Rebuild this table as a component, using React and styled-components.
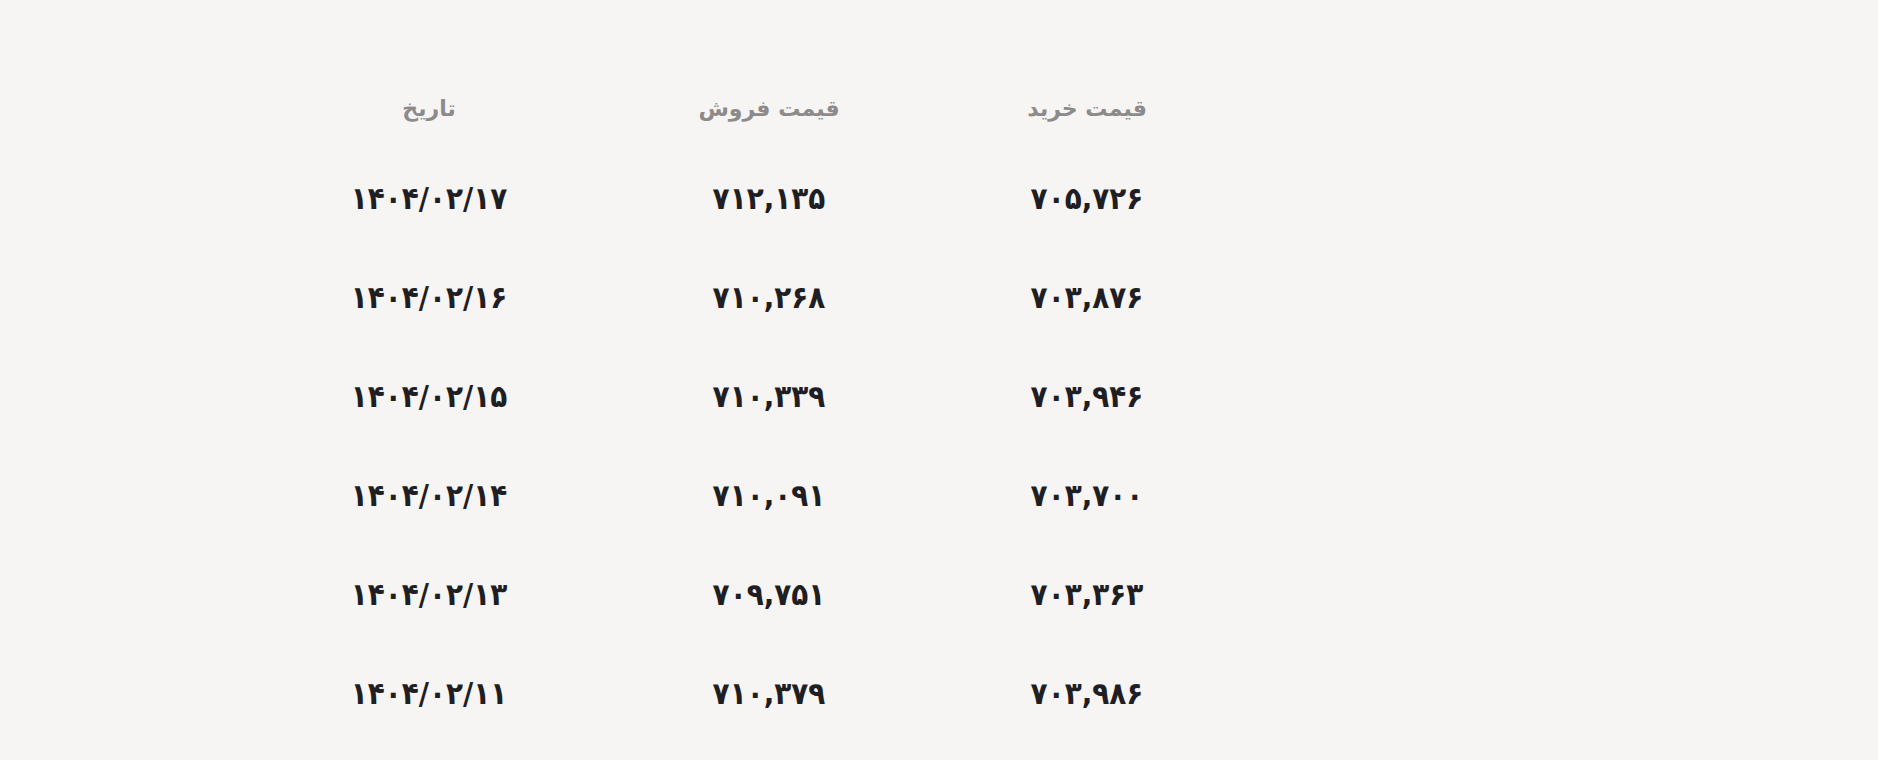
import React from "react";
import styled, { createGlobalStyle } from "styled-components";

const GlobalStyle = createGlobalStyle`
  html, body {
    margin: 0;
    padding: 0;
    background: #f7f4f4;
    font-family: "DejaVu Sans", "Noto Sans", sans-serif;
  }
`;

const rows = [
  { date: "۱۴۰۴/۰۲/۱۷", sell: "۷۱۲,۱۳۵", buy: "۷۰۵,۷۲۶" },
  { date: "۱۴۰۴/۰۲/۱۶", sell: "۷۱۰,۲۶۸", buy: "۷۰۳,۸۷۶" },
  { date: "۱۴۰۴/۰۲/۱۵", sell: "۷۱۰,۳۳۹", buy: "۷۰۳,۹۴۶" },
  { date: "۱۴۰۴/۰۲/۱۴", sell: "۷۱۰,۰۹۱", buy: "۷۰۳,۷۰۰" },
  { date: "۱۴۰۴/۰۲/۱۳", sell: "۷۰۹,۷۵۱", buy: "۷۰۳,۳۶۳" },
  { date: "۱۴۰۴/۰۲/۱۱", sell: "۷۱۰,۳۷۹", buy: "۷۰۳,۹۸۶" },
];

function App() {
  return (
    <Page>
      <GlobalStyle />
      <Table>
        <Row $header>
          <HeadCell>قیمت خرید</HeadCell>
          <HeadCell>قیمت فروش</HeadCell>
          <HeadCell>تاریخ</HeadCell>
        </Row>
        {rows.map((r) => (
          <Row key={r.date}>
            <Cell>{r.buy}</Cell>
            <Cell>{r.sell}</Cell>
            <Cell>{r.date}</Cell>
          </Row>
        ))}
      </Table>
    </Page>
  );
}

export default App;

const Page = styled.div`
  display: flex;
  direction: rtl;
  width: 100%;
  min-height: 760px;
  padding: 68px 632px 0 0;
  box-sizing: border-box;
  background: #f7f4f4;
`;

const Table = styled.div`
  display: flex;
  flex-direction: column;
  width: 998px;
`;

const Row = styled.div`
  display: grid;
  grid-template-columns: 318px 318px 362px;
  align-items: center;
  height: ${(p) => (p.$header ? "80px" : "99px")};
`;

const HeadCell = styled.div`
  text-align: center;
  font-size: 22px;
  font-weight: 700;
  color: #8c8a8a;
`;

const Cell = styled.div`
  text-align: center;
  font-family: "DejaVu Sans Condensed", "DejaVu Sans", sans-serif;
  font-size: 31px;
  font-weight: 700;
  letter-spacing: -1.6px;
  color: #1f1e22;
`;
